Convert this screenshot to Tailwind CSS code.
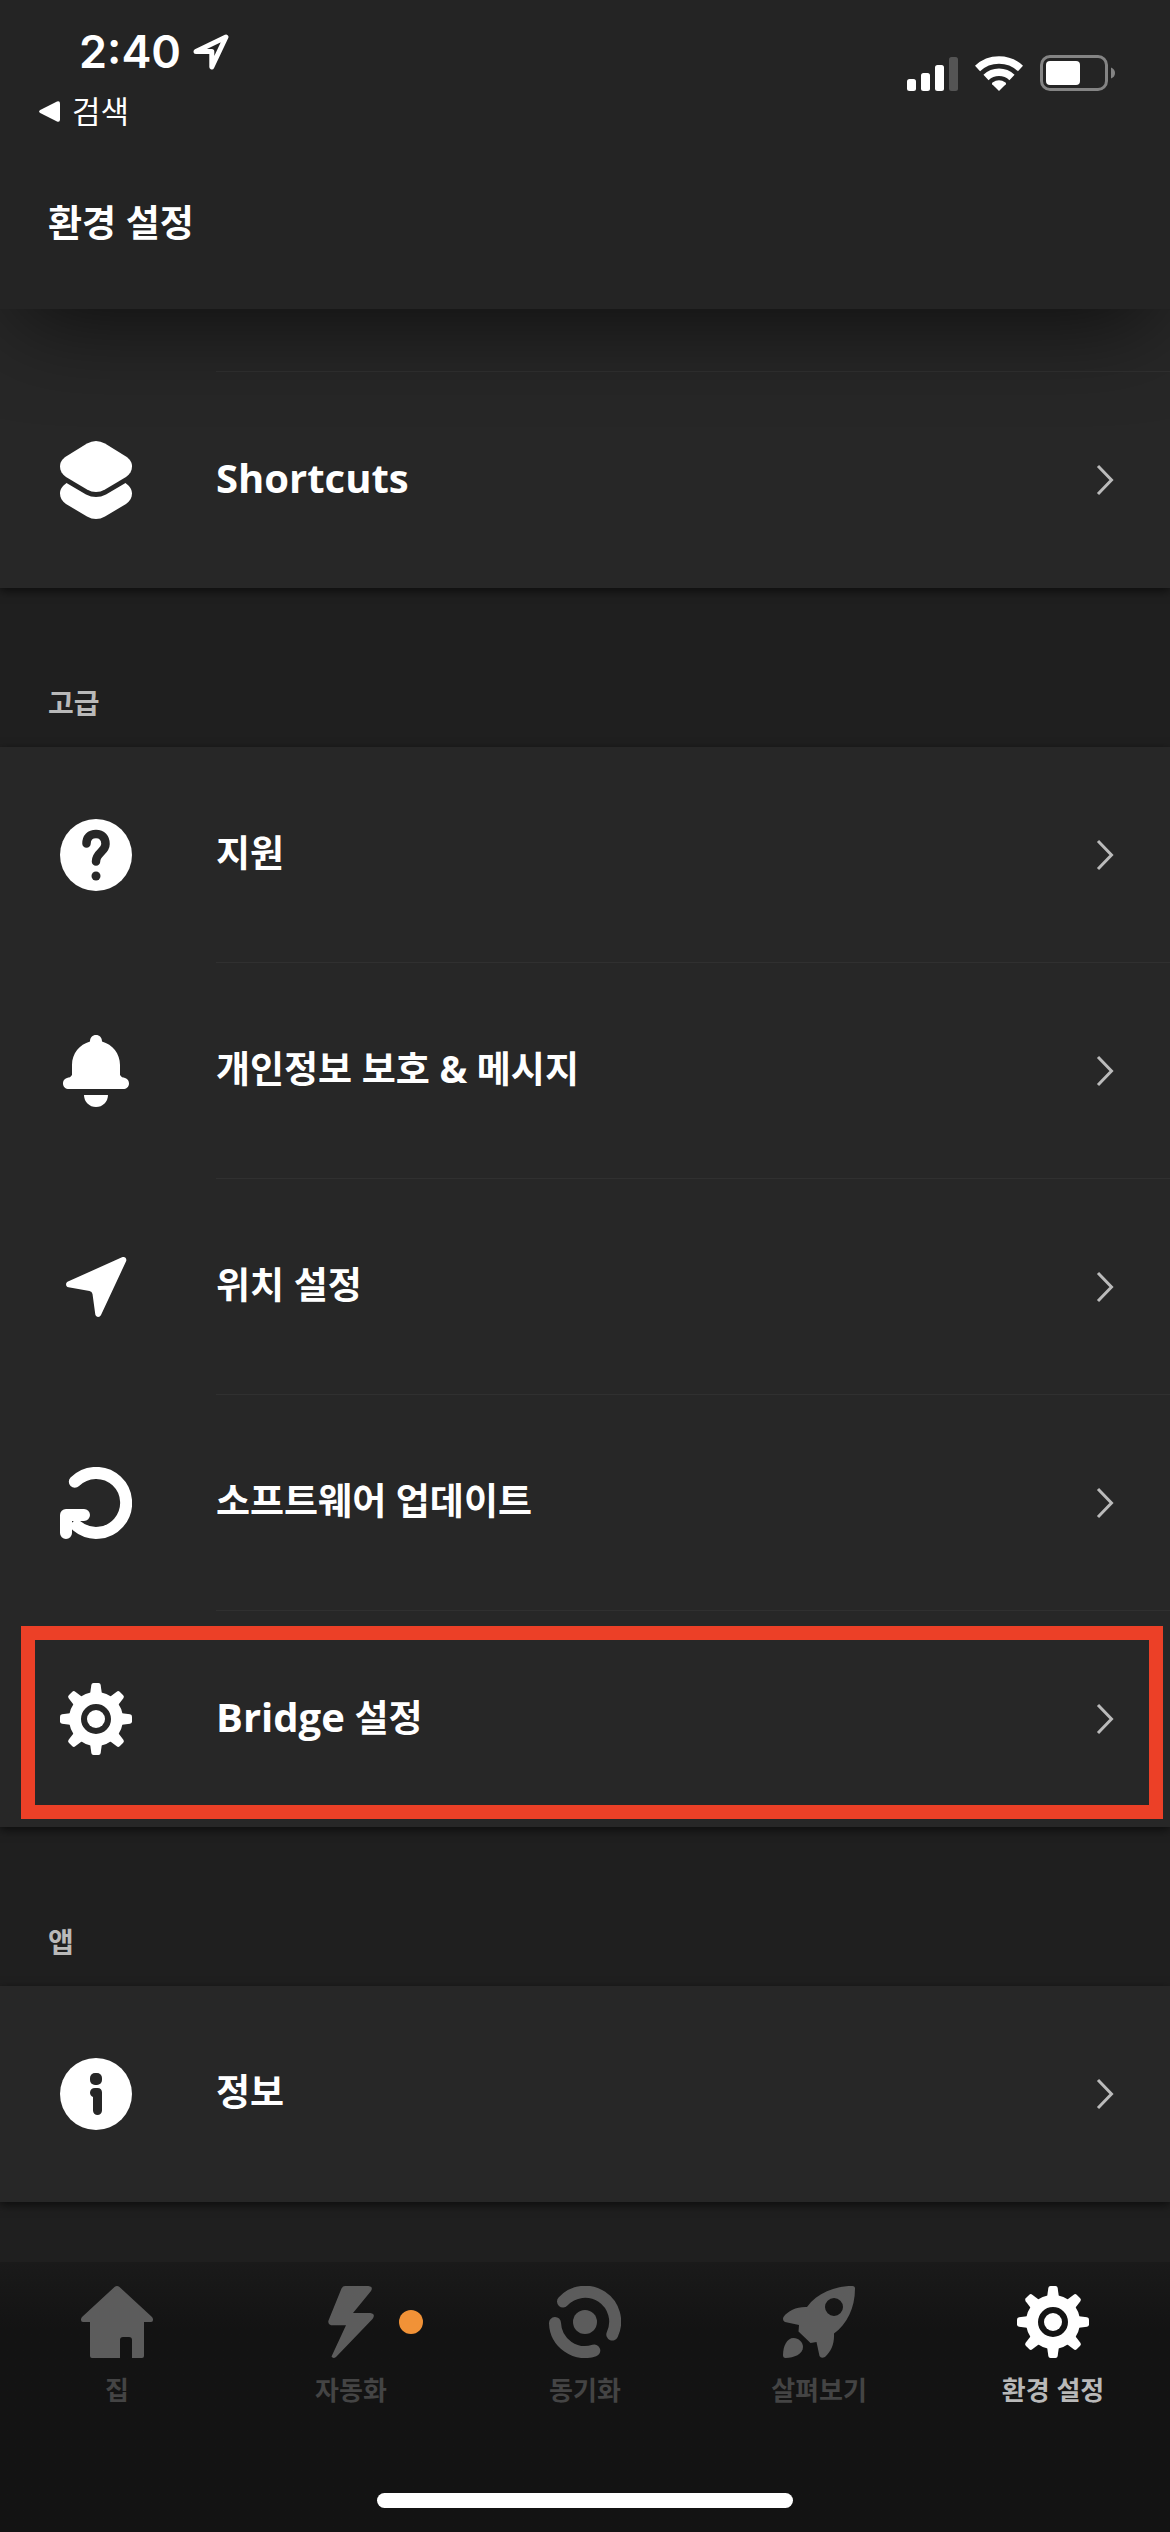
<!DOCTYPE html>
<html lang="ko">
<head>
<meta charset="utf-8">
<meta name="viewport" content="width=device-width, initial-scale=1">
<title>환경 설정</title>
<script src="https://cdn.jsdelivr.net/npm/@tailwindcss/browser@4"></script>
</head>
<body class="flex min-h-screen flex-col overflow-x-hidden bg-[#1f1f1f] font-['Open_Sans','Noto_Sans_CJK_KR',sans-serif] text-white">

<!-- Shared symbols -->
<svg class="hidden" aria-hidden="true">
  <symbol id="gear" viewBox="0 0 72 72">
    <circle cx="36" cy="36" r="21" fill="none" stroke="currentColor" stroke-width="12"/>
    <circle cx="36" cy="36" r="9" fill="currentColor"/>
    <g fill="currentColor">
      <path id="tooth" d="M30 12L31.3 2Q31.6 0 33.5 0H38.5Q40.4 0 40.7 2L42 12Z"/>
      <use href="#tooth" transform="rotate(45 36 36)"/>
      <use href="#tooth" transform="rotate(90 36 36)"/>
      <use href="#tooth" transform="rotate(135 36 36)"/>
      <use href="#tooth" transform="rotate(180 36 36)"/>
      <use href="#tooth" transform="rotate(225 36 36)"/>
      <use href="#tooth" transform="rotate(270 36 36)"/>
      <use href="#tooth" transform="rotate(315 36 36)"/>
    </g>
  </symbol>
  <symbol id="chevron" viewBox="0 0 18 32">
    <path d="M2 2L15.5 16L2 30" fill="none" stroke="currentColor" stroke-width="3"/>
  </symbol>
</svg>

<header class="relative z-10 bg-[#242424] pb-14 pt-7 shadow-[0_30px_90px_-20px_rgba(0,0,0,0.65)]">
  <div class="flex items-start justify-between pl-[39px] pr-[55px]">
    <div>
      <div class="flex h-12 items-center gap-3 pl-10">
        <time class="font-['Inter',sans-serif] text-[45px] font-semibold leading-[48px]">2:40</time>
        <svg class="size-9" viewBox="0 0 36 36" fill="none" stroke="currentColor" stroke-width="5" stroke-linejoin="round" aria-hidden="true"><path d="M3 17.500L33 3L18.800 33V17.500Z"/></svg>
      </div>
      <a href="#" class="mt-[11px] flex h-12 items-center gap-3">
        <svg class="size-[21px]" viewBox="0 0 21 21" fill="currentColor" aria-hidden="true"><path d="M1.200 9L18 .5Q21 -.5 21 2.500V18.500Q21 21.500 18 20.500L1.200 12Q-1 10.500 1.200 9Z"/></svg>
        <span class="text-[31px] font-normal leading-[48px]">검색</span>
      </a>
    </div>
    <div class="mt-[27px] flex items-center gap-[17px]">
      <svg class="h-9 w-[51px]" viewBox="0 0 51 36" fill="currentColor" aria-hidden="true">
        <rect x="0" y="24" width="9" height="12" rx="2.500"/><rect x="14" y="18" width="9" height="18" rx="2.500"/><rect x="28" y="10" width="9" height="26" rx="2.500"/><rect x="42" y="2" width="9" height="34" rx="2.500" opacity=".22"/>
      </svg>
      <svg class="h-9 w-12" viewBox="0 0 48 36" fill="none" stroke="currentColor" stroke-width="7.500" aria-hidden="true">
        <path d="M2.500 13.500A31.500 31.500 0 0 1 45.500 13.500"/><path d="M11 22.500A19 19 0 0 1 37 22.500"/><path d="M24 36L17.200 29.200Q16.500 28.300 17.500 27.500Q24 23 30.500 27.500Q31.500 28.300 30.800 29.200Z" fill="currentColor" stroke="none"/>
      </svg>
      <svg class="h-9 w-[75px]" viewBox="0 0 75 36" aria-hidden="true">
        <rect x="1.500" y="1.500" width="65" height="33" rx="8.500" fill="none" stroke="#848484" stroke-width="3"/><rect x="6" y="6" width="34" height="24" rx="4" fill="#fff"/><path d="M71 12.500Q75 14 75 18T71 23.500Z" fill="#848484"/>
      </svg>
    </div>
  </div>
  <h1 class="mt-[58px] px-12 text-[37px] font-bold leading-[60px]">환경 설정</h1>
</header>

<main class="flex-1">
  <section class="bg-[#272727] shadow-[0_3px_9px_rgba(0,0,0,0.6)]">
    <div class="ml-[216px] h-[63px] border-b border-[#303030]"></div>
    <a href="#" class="flex h-[216px] items-center pl-[60px] pr-14">
      <svg class="h-[78px] w-[72px] shrink-0" viewBox="0 0 72 78" fill="currentColor" aria-hidden="true"><path d="M27 2.500Q36 -2.500 45 2.500L66 15.500C70 18.500 72 21 72 25.500S70 33 66 36L45 48.500Q36 53.500 27 48.500L6 36C2 33 0 30 0 25.500S2 18.500 6 15.500Z"/><path d="M6.500 42L26 53.500Q36 58.500 46 53.500L65.500 42C69.500 45 72 48 72 52.500S70 60 66 63L45 75.500Q36 80.500 27 75.500L6 63C2 60 0 57 0 52.500S2.500 45 6.500 42Z"/></svg>
      <span class="ml-[84px] flex-1 pb-1 text-[40px] font-bold leading-[60px]">Shortcuts</span>
      <svg class="h-8 w-[18px] text-[#bbb]" aria-hidden="true"><use href="#chevron"/></svg>
    </a>
  </section>

  <h2 class="flex h-[159px] items-end px-12 pb-6 text-[28px] font-bold leading-10 text-[#b9b9b9]">고급</h2>

  <section class="bg-[#272727] shadow-[0_3px_9px_rgba(0,0,0,0.6)]">
    <a href="#" class="flex h-[216px] items-center pl-[60px]">
      <svg class="size-[72px] shrink-0" viewBox="0 0 72 72" aria-hidden="true"><circle cx="36" cy="36" r="36" fill="#fff"/><path d="M26.500 24.500C26.500 18.500 30 15 36 15S45.500 19 45.500 25C45.500 33 36 33.500 36 42.500" fill="none" stroke="#272727" stroke-width="8.500" stroke-linecap="round"/><circle cx="36" cy="57" r="4.500" fill="#272727"/></svg>
      <span class="ml-[84px] flex h-full flex-1 items-center justify-between border-b border-[#303030] pr-14 text-[37px] font-bold leading-[60px]"><span class="pb-1">지원</span><svg class="h-8 w-[18px] text-[#bbb]" aria-hidden="true"><use href="#chevron"/></svg></span>
    </a>
    <a href="#" class="flex h-[216px] items-center pl-[60px]">
      <svg class="size-[72px] shrink-0" viewBox="0 0 72 72" fill="currentColor" aria-hidden="true"><path d="M30 6.500C30 2.500 32.500 0 36 0S42 2.500 42 6.500C52.500 9.500 60 18.500 60 30V40L62 42.300C66.500 42.800 69 45 69 48.500C69 52 66.500 54 63 54H9C5.500 54 3 52 3 48.500C3 45 5.500 42.800 10 42.300L12 40V30C12 18.500 19.500 9.500 30 6.500Z"/><path d="M24 60H48A12 12 0 0 1 24 60Z"/></svg>
      <span class="ml-[84px] flex h-full flex-1 items-center justify-between border-b border-[#303030] pr-14 text-[37px] font-bold leading-[60px]"><span class="pb-1">개인정보 보호 &amp; 메시지</span><svg class="h-8 w-[18px] text-[#bbb]" aria-hidden="true"><use href="#chevron"/></svg></span>
    </a>
    <a href="#" class="flex h-[216px] items-center pl-[60px]">
      <svg class="size-[72px] shrink-0" viewBox="0 0 72 72" fill="currentColor" aria-hidden="true"><path d="M62 6.300C64.500 5 67 7 66.200 10L41 64C39.800 66.800 36 66.600 35.300 63.500L32.500 43Q32 40.500 29.500 40L8.500 36.300C5.500 35.600 5.200 31.800 8 30.500Z"/></svg>
      <span class="ml-[84px] flex h-full flex-1 items-center justify-between border-b border-[#303030] pr-14 text-[37px] font-bold leading-[60px]"><span class="pb-1">위치 설정</span><svg class="h-8 w-[18px] text-[#bbb]" aria-hidden="true"><use href="#chevron"/></svg></span>
    </a>
    <a href="#" class="flex h-[216px] items-center pl-[60px]">
      <svg class="size-[72px] shrink-0" viewBox="0 0 72 72" fill="none" stroke="currentColor" stroke-width="12" stroke-linecap="round" stroke-linejoin="round" aria-hidden="true"><path d="M14.800 14.800A30 30 0 1 1 17 59"/><path d="M6 66V48H24"/></svg>
      <span class="ml-[84px] flex h-full flex-1 items-center justify-between border-b border-[#303030] pr-14 text-[37px] font-bold leading-[60px]"><span class="pb-1">소프트웨어 업데이트</span><svg class="h-8 w-[18px] text-[#bbb]" aria-hidden="true"><use href="#chevron"/></svg></span>
    </a>
    <a href="#" class="relative flex h-[216px] items-center pl-[60px]">
      <svg class="size-[72px] shrink-0" aria-hidden="true"><use href="#gear"/></svg>
      <span class="ml-[84px] flex h-full flex-1 items-center justify-between pr-14 text-[37px] font-bold leading-[60px]"><span class="pb-1"><span class="text-[40px]">Bridge</span> 설정</span><svg class="h-8 w-[18px] text-[#bbb]" aria-hidden="true"><use href="#chevron"/></svg></span>
      <span class="absolute bottom-2 left-[21px] right-[7px] top-[15px] border-[14px] border-[#ec4027]"></span>
    </a>
  </section>

  <h2 class="flex h-[159px] items-end px-12 pb-6 text-[28px] font-bold leading-10 text-[#b9b9b9]">앱</h2>

  <section class="mb-[60px] bg-[#272727] shadow-[0_3px_9px_rgba(0,0,0,0.6)]">
    <a href="#" class="flex h-[216px] items-center pl-[60px] pr-14">
      <svg class="size-[72px] shrink-0" viewBox="0 0 72 72" aria-hidden="true"><circle cx="36" cy="36" r="36" fill="#fff"/><rect x="30" y="15" width="12" height="12" rx="5" fill="#272727"/><path d="M35 30H37.500C40.500 30 42 32 42 34.500V52.500A4.500 4.500 0 0 1 33 52.500V39C31 38.500 30 36.500 30 34.500C30 32 32 30 35 30Z" fill="#272727"/></svg>
      <span class="ml-[84px] flex-1 pb-1 text-[37px] font-bold leading-[60px]">정보</span>
      <svg class="h-8 w-[18px] text-[#bbb]" aria-hidden="true"><use href="#chevron"/></svg>
    </a>
  </section>
</main>

<nav class="bg-[#131313] bg-linear-to-b from-[#1a1a1a] to-[#131313] to-25% pb-6 pt-6">
  <div class="grid grid-cols-5 text-[26px] font-bold leading-10 text-[#444]">
    <a href="#" class="flex flex-col items-center gap-3">
      <svg class="size-[72px] text-[#5c5c5c]" viewBox="0 0 72 72" fill="currentColor" aria-hidden="true"><path d="M33.500 1Q36 -1 38.500 1L71 31Q72 32 72 33.500V34Q72 36 70 36H63V70Q63 72 61 72H51V54Q51 51 48 51H42Q39 51 39 54V72H11Q9 72 9 70V36H2Q0 36 0 34V33.500Q0 32 1 31Z"/></svg>
      집
    </a>
    <a href="#" class="flex flex-col items-center gap-3">
      <span class="relative">
        <svg class="size-[72px] text-[#5c5c5c]" viewBox="0 0 72 72" fill="currentColor" aria-hidden="true"><path d="M30 0H53.500Q58.500 0.500 56 5L38 27H55.500Q61 28 57.500 33L21 71Q18 73 16.500 70.500L31 39.300H16Q12.500 38.500 13.500 34.500L26.500 2.500Q27.500 0 30 0Z"/></svg>
        <span class="absolute -right-9 top-6 size-6 rounded-full bg-[#f19237]"></span>
      </span>
      자동화
    </a>
    <a href="#" class="flex flex-col items-center gap-3">
      <svg class="size-[72px] text-[#5c5c5c]" viewBox="0 0 72 72" fill="none" stroke="currentColor" stroke-width="12" stroke-linecap="round" aria-hidden="true"><path d="M14 15.500A30 30 0 0 1 63.300 48.500"/><path d="M6 37A30 30 0 0 0 45.300 64.500"/><circle cx="36" cy="36" r="12" fill="currentColor" stroke="none"/></svg>
      동기화
    </a>
    <a href="#" class="flex flex-col items-center gap-3">
      <svg class="size-[72px] text-[#5c5c5c]" viewBox="0 0 72 72" fill="currentColor" fill-rule="evenodd" aria-hidden="true"><path d="M69.500 0Q72 0 72 2.500C72 22 64 38 51 47.500C51.500 58 48 65.500 42 71Q38 73 36.500 70L33.500 56L27.500 57L15.500 45.500L16 39L2 36Q-1 34.500 .5 31C5 24.500 14 20.500 24 21C34 7 52 0 69.500 0ZM51 12A9 9 0 1 0 51 30A9 9 0 1 0 51 12Z"/><path d="M0 69C0 60 4 52 10.500 52C15.500 52 20 56 20 61C20 68 11 72 2.500 72Q0 72 0 69Z"/></svg>
      살펴보기
    </a>
    <a href="#" aria-current="page" class="flex flex-col items-center gap-3 text-[#b9b9b9]">
      <svg class="size-[72px] text-white" aria-hidden="true"><use href="#gear"/></svg>
      환경 설정
    </a>
  </div>
  <div class="mx-auto mt-[83px] h-[15px] w-[416px] rounded-full bg-white"></div>
</nav>

</body>
</html>
